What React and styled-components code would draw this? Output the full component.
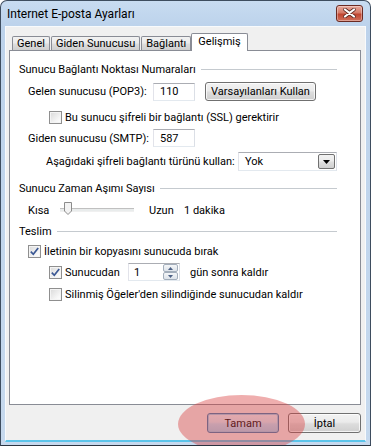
import React from 'react';
import styled, { createGlobalStyle } from 'styled-components';

const GlobalStyle = createGlobalStyle`
  html, body {
    margin: 0;
    padding: 0;
    background: #ffffff;
  }
  body {
    font-family: Roboto, "Liberation Sans", Arial, sans-serif;
    font-size: 11px;
    color: #000;
  }
`;

const Window = styled.div`
  position: relative;
  width: 371px;
  height: 446px;
  box-sizing: border-box;
  border: 1px solid #3e4d5f;
  border-bottom-color: #2b3440;
  border-radius: 7px 7px 0 0;
  background: linear-gradient(to bottom, #c8dcf1, #bcd2eb 26px, #c6d9ee);
  display: flex;
  flex-direction: column;
  overflow: hidden;
`;

const TitleBar = styled.div`
  height: 25px;
  flex: none;
  display: flex;
  align-items: center;
  justify-content: space-between;
  padding: 0 7px 0 6px;
`;

const Title = styled.span`
  font-size: 12px;
  color: #000;
`;

const CloseButton = styled.div`
  width: 27px;
  height: 17px;
  margin-top: -1px;
  box-sizing: border-box;
  border: 1px solid #6b2a22;
  border-radius: 3px;
  background: linear-gradient(to bottom, #e9a99b, #d47a68 45%, #c04530 55%, #d0705c);
  box-shadow: inset 0 0 0 1px rgba(255, 255, 255, 0.35);
  display: flex;
  align-items: center;
  justify-content: center;
`;

const Frame = styled.div`
  flex: 1;
  display: flex;
  padding: 0 4px 3px 4px;
  min-height: 0;
`;

const Client = styled.div`
  flex: 1;
  display: flex;
  flex-direction: column;
  background: #f0f0f0;
  border: 1px solid #f8fafc;
  border-bottom: 2px solid #5bc4ea;
  padding: 6px 4px 7px 3px;
`;

const TabRow = styled.div`
  display: flex;
  align-items: flex-end;
  padding-left: 3px;
  height: 17px;
  flex: none;
`;

const Tab = styled.div`
  position: relative;
  box-sizing: border-box;
  height: ${p => (p.$active ? 18 : 14)}px;
  margin: ${p => (p.$active ? '0 -2px -1px -1px' : '0 1px 0 0')};
  padding: 0 ${p => (p.$active ? 6 : 4)}px;
  border: 1px solid #898c95;
  border-bottom: none;
  border-radius: 2px 2px 0 0;
  background: ${p =>
    p.$active
      ? '#ffffff'
      : 'linear-gradient(to bottom, #f2f2f2, #ebebeb 45%, #dddddd 55%, #cfcfcf)'};
  z-index: ${p => (p.$active ? 2 : 1)};
  display: flex;
  align-items: center;
  padding-bottom: ${p => (p.$active ? 2 : 0)}px;
  white-space: nowrap;
`;

const Panel = styled.div`
  position: relative;
  flex: 1;
  background: #fff;
  border: 1px solid #898c95;
  padding: 10px 9px 0 9px;
  display: flex;
  flex-direction: column;
`;

const HeaderRow = styled.div`
  display: flex;
  align-items: center;
  height: 16px;
  margin-top: ${p => p.$mt || 0}px;
`;

const Rule = styled.div`
  flex: 1;
  height: 1px;
  background: #c5cacf;
  margin: 1px 14px 0 5px;
`;

const Row = styled.div`
  display: flex;
  align-items: center;
  height: ${p => p.$h || 16}px;
  margin-top: ${p => p.$mt || 0}px;
  padding-left: ${p => p.$indent || 0}px;
  white-space: nowrap;
`;

const Label = styled.span`
  flex: none;
  width: ${p => (p.$w ? `${p.$w}px` : 'auto')};
  margin-left: ${p => p.$ml || 0}px;
`;

const TextBox = styled.div`
  flex: none;
  box-sizing: border-box;
  width: ${p => p.$w}px;
  height: 18px;
  border: 1px solid;
  border-color: #abadb3 #dbdfe6 #e3e9ef #e2e3ea;
  background: #fff;
  padding-left: 6px;
  display: flex;
  align-items: center;
`;

const PushButton = styled.div`
  flex: none;
  box-sizing: border-box;
  width: ${p => p.$w}px;
  height: ${p => p.$h || 19}px;
  margin-left: ${p => p.$ml || 0}px;
  border: 1px solid ${p => (p.$default ? '#3c7fb1' : '#707070')};
  border-radius: 3px;
  background: ${p =>
    p.$default
      ? 'linear-gradient(to bottom, #eaf6fd, #d9f0fc 45%, #bee6fd 55%, #a7d9f5)'
      : 'linear-gradient(to bottom, #f2f2f2, #ebebeb 45%, #dddddd 55%, #cfcfcf)'};
  box-shadow: inset 0 0 0 1px ${p => (p.$default ? '#9ed4f2' : 'rgba(255,255,255,0.75)')};
  display: flex;
  align-items: center;
  justify-content: center;
  font-size: 11px;
`;

const Box = styled.div`
  flex: none;
  box-sizing: border-box;
  width: 13px;
  height: 13px;
  margin-left: ${p => p.$ml || 0}px;
  margin-right: 3px;
  border: 1px solid #8f8f8f;
  background: linear-gradient(135deg, #d9d9d9, #f6f6f6 70%, #ffffff);
  box-shadow: inset 0 0 0 1px #f4f4f4;
  display: flex;
  align-items: center;
  justify-content: center;
`;

const SelectBox = styled.div`
  flex: none;
  box-sizing: border-box;
  width: 99px;
  height: 19px;
  border: 1px solid;
  border-color: #abadb3 #dbdfe6 #e3e9ef #e2e3ea;
  background: #fff;
  display: flex;
  align-items: center;
  justify-content: space-between;
  padding: 0 1px 0 6px;
`;

const DropButton = styled.div`
  box-sizing: border-box;
  width: 17px;
  height: 15px;
  border: 1px solid #707070;
  border-radius: 2px;
  background: linear-gradient(to bottom, #f2f2f2, #ebebeb 45%, #dddddd 55%, #cfcfcf);
  display: flex;
  align-items: center;
  justify-content: center;
`;

const Track = styled.div`
  position: relative;
  flex: none;
  width: 74px;
  height: 2px;
  margin: 0 15px 0 0;
  border-top: 1px solid #c0c0c0;
  border-bottom: 1px solid #f0f0f0;
  background: #e9ecec;
`;

const Thumb = styled.svg`
  position: absolute;
  left: 4px;
  top: -7px;
`;

const SpinBox = styled.div`
  flex: none;
  box-sizing: border-box;
  width: 52px;
  height: 18px;
  border: 1px solid;
  border-color: #abadb3 #dbdfe6 #e3e9ef #e2e3ea;
  background: #fff;
  display: flex;
  align-items: center;
  justify-content: space-between;
  padding: 0 1px 0 5px;
`;

const SpinButtons = styled.div`
  display: flex;
  flex-direction: column;
`;

const SpinButton = styled.div`
  box-sizing: border-box;
  width: 15px;
  height: 8px;
  border: 1px solid #a3aebb;
  border-radius: 2px;
  background: linear-gradient(to bottom, #f4f6f8, #dde3ea);
  display: flex;
  align-items: center;
  justify-content: center;
`;

const ButtonRow = styled.div`
  display: flex;
  justify-content: flex-end;
  gap: 9px;
  margin-top: 8px;
  flex: none;
`;

const Highlight = styled.div`
  position: absolute;
  left: 177px;
  top: 394px;
  width: 127px;
  height: 58px;
  border-radius: 50%;
  background: rgba(218, 62, 62, 0.42);
  pointer-events: none;
`;

const Checkbox = ({ checked, ml }) => (
  <Box $ml={ml}>
    {checked && (
      <svg width="9" height="9" viewBox="0 0 9 9">
        <path d="M0.8 4.6 L3.3 7.3 L8.2 0.9" fill="none" stroke="#3b5894" strokeWidth="1.7" />
      </svg>
    )}
  </Box>
);

const GroupHeader = ({ title, mt }) => (
  <HeaderRow $mt={mt}>
    <span>{title}</span>
    <Rule />
  </HeaderRow>
);

export default function App() {
  return (
    <>
      <GlobalStyle />
      <Window>
        <TitleBar>
          <Title>Internet E-posta Ayarları</Title>
          <CloseButton>
            <svg width="13" height="10" viewBox="0 0 13 10">
              <path d="M2 1.5 L11 8.5 M11 1.5 L2 8.5" stroke="#5a2a24" strokeWidth="3.6" strokeLinecap="round" />
              <path d="M2 1.5 L11 8.5 M11 1.5 L2 8.5" stroke="#ffffff" strokeWidth="2.2" strokeLinecap="round" />
            </svg>
          </CloseButton>
        </TitleBar>
        <Frame>
          <Client>
            <TabRow>
              <Tab>Genel</Tab>
              <Tab>Giden Sunucusu</Tab>
              <Tab>Bağlantı</Tab>
              <Tab $active>Gelişmiş</Tab>
            </TabRow>
            <Panel>
              <GroupHeader title="Sunucu Bağlantı Noktası Numaraları" />
              <Row $h={19} $mt={5} $indent={9}>
                <Label $w={125}>Gelen sunucusu (POP3):</Label>
                <TextBox $w={42}>110</TextBox>
                <PushButton $w={111} $ml={10}>Varsayılanları Kullan</PushButton>
              </Row>
              <Row $mt={8} $indent={30}>
                <Checkbox />
                <Label>Bu sunucu şifreli bir bağlantı (SSL) gerektirir</Label>
              </Row>
              <Row $h={18} $mt={4} $indent={9}>
                <Label $w={125}>Giden sunucusu (SMTP):</Label>
                <TextBox $w={42}>587</TextBox>
              </Row>
              <Row $h={19} $mt={5} $indent={27}>
                <Label $w={192}>Aşağıdaki şifreli bağlantı türünü kullan:</Label>
                <SelectBox>
                  <span>Yok</span>
                  <DropButton>
                    <svg width="7" height="4" viewBox="0 0 7 4">
                      <path d="M0 0 H7 L3.5 4 Z" fill="#000" />
                    </svg>
                  </DropButton>
                </SelectBox>
              </Row>
              <GroupHeader title="Sunucu Zaman Aşımı Sayısı" mt={9} />
              <Row $mt={6} $indent={9}>
                <Label $w={32}>Kısa</Label>
                <Track>
                  <Thumb width="8" height="13" viewBox="0 0 8 13">
                    <path d="M0.5 0.5 H7.5 V9 L4 12.5 L0.5 9 Z" fill="#f3f3f3" stroke="#8c8c8c" />
                  </Thumb>
                </Track>
                <Label $w={35}>Uzun</Label>
                <Label>1 dakika</Label>
              </Row>
              <GroupHeader title="Teslim" mt={5} />
              <Row $mt={4} $indent={9}>
                <Checkbox checked />
                <Label>İletinin bir kopyasını sunucuda bırak</Label>
              </Row>
              <Row $h={18} $mt={4} $indent={30}>
                <Checkbox checked />
                <Label $w={63}>Sunucudan</Label>
                <SpinBox>
                  <span>1</span>
                  <SpinButtons>
                    <SpinButton>
                      <svg width="5" height="3" viewBox="0 0 5 3"><path d="M0 3 H5 L2.5 0 Z" fill="#4d6185" /></svg>
                    </SpinButton>
                    <SpinButton>
                      <svg width="5" height="3" viewBox="0 0 5 3"><path d="M0 0 H5 L2.5 3 Z" fill="#4d6185" /></svg>
                    </SpinButton>
                  </SpinButtons>
                </SpinBox>
                <Label $ml={10}>gün sonra kaldır</Label>
              </Row>
              <Row $mt={5} $indent={30}>
                <Checkbox />
                <Label>Silinmiş Öğeler'den silindiğinde sunucudan kaldır</Label>
              </Row>
            </Panel>
            <ButtonRow>
              <PushButton $w={72} $h={20} $default>Tamam</PushButton>
              <PushButton $w={73} $h={20}>İptal</PushButton>
            </ButtonRow>
          </Client>
        </Frame>
        <Highlight />
      </Window>
    </>
  );
}
